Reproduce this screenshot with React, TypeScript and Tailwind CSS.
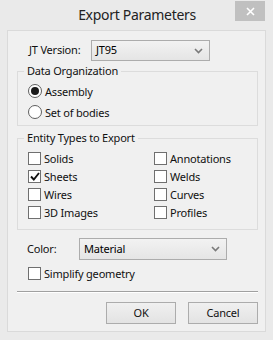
import React from "react";

const font = { fontFamily: "'Noto Sans', 'Open Sans', sans-serif" };

function Chevron() {
  return (
    <svg width="9" height="6" viewBox="0 0 9 6" className="shrink-0">
      <path d="M1 1 L4.5 4.5 L8 1" fill="none" stroke="#7a7a7a" strokeWidth="1.6" />
    </svg>
  );
}

function Select({ value, className }: { value: string; className: string }) {
  return (
    <div
      className={`flex items-center justify-between border border-[#acacac] bg-gradient-to-b from-[#f2f2f2] to-[#e5e5e5] pl-[4px] pr-[6px] text-[11px] tracking-[-0.2px] text-black ${className}`}
    >
      <span>{value}</span>
      <Chevron />
    </div>
  );
}

function CheckBox({ label, checked = false }: { label: string; checked?: boolean }) {
  return (
    <div className="flex h-[18px] items-center gap-[3px]">
      <span className="flex h-[13px] w-[13px] items-center justify-center border border-[#6f6f6f] bg-white">
        {checked && (
          <svg width="10" height="9" viewBox="0 0 10 9">
            <path d="M1 4.5 L3.8 7.5 L9 1" fill="none" stroke="#111" strokeWidth="1.9" />
          </svg>
        )}
      </span>
      <span className="text-[11px] leading-none tracking-[-0.2px] text-[#111]">{label}</span>
    </div>
  );
}

function Radio({ label, checked = false }: { label: string; checked?: boolean }) {
  return (
    <div className="flex h-[16px] items-center gap-[3px]">
      <span className="flex h-[14px] w-[14px] items-center justify-center rounded-full border border-[#5f5f5f] bg-white">
        {checked && <span className="h-[8px] w-[8px] rounded-full bg-[#1b1b1b]" />}
      </span>
      <span className="text-[11px] leading-none tracking-[-0.2px] text-[#111]">{label}</span>
    </div>
  );
}

export default function App() {
  return (
    <div className="flex h-[340px] w-[273px] flex-col bg-[#eaeaea]" style={font}>
      {/* Title bar */}
      <div className="relative h-[30px] shrink-0">
        <div className="pl-[1px] pt-[4px] text-center text-[14px] leading-[22px] tracking-[-0.3px] text-[#222]">Export Parameters</div>
        <div className="absolute right-[8px] top-[1px] flex h-[20px] w-[30px] items-center justify-center bg-[#c0c0c0]">
          <svg width="9" height="9" viewBox="0 0 9 9">
            <path d="M1 1 L8 8 M8 1 L1 8" stroke="#fff" strokeWidth="1.6" />
          </svg>
        </div>
      </div>

      {/* Client area */}
      <div className="mx-[7px] mb-[8px] flex flex-1 flex-col border border-[#dadada] bg-[#f0f0f0] pl-[9px] pr-[7px]">
        <div className="mt-[9px] flex items-center">
          <span className="w-[74px] pl-[12px] text-[11px] tracking-[-0.2px] text-[#111]">JT Version:</span>
          <Select value="JT95" className="h-[21px] w-[119px]" />
        </div>

        <fieldset className="mt-[2px] border border-[#dcdcdc] pb-[5px]">
          <legend className="ml-[6px] px-[3px] text-[11px] leading-[16px] tracking-[-0.2px] text-[#111]">Data Organization</legend>
          <div className="mt-[4px] flex flex-col gap-[5px] pl-[10px]">
            <Radio label="Assembly" checked />
            <Radio label="Set of bodies" />
          </div>
        </fieldset>

        <fieldset className="mt-[4px] border border-[#dcdcdc] pb-[8px]">
          <legend className="ml-[6px] px-[3px] text-[11px] leading-[16px] tracking-[-0.2px] text-[#111]">Entity Types to Export</legend>
          <div className="mt-[3px] grid grid-cols-[126px_1fr] pl-[10px]">
            <CheckBox label="Solids" />
            <CheckBox label="Annotations" />
            <CheckBox label="Sheets" checked />
            <CheckBox label="Welds" />
            <CheckBox label="Wires" />
            <CheckBox label="Curves" />
            <CheckBox label="3D Images" />
            <CheckBox label="Profiles" />
          </div>
        </fieldset>

        <div className="mt-[8px] flex items-center">
          <span className="w-[62px] pl-[10px] text-[11px] tracking-[-0.2px] text-[#111]">Color:</span>
          <Select value="Material" className="h-[22px] w-[148px]" />
        </div>

        <div className="mt-[4px] pl-[11px]">
          <CheckBox label="Simplify geometry" />
        </div>

        <div className="mt-[9px] h-[2px] border-t border-[#a0a0a0] bg-white" />

        <div className="mt-[9px] flex justify-end gap-[12px]">
          <button className="h-[22px] w-[70px] border border-[#acacac] bg-gradient-to-b from-[#f0f0f0] to-[#e3e3e3] text-[11px] tracking-[-0.2px] text-[#111]">
            OK
          </button>
          <button className="h-[22px] w-[70px] border border-[#acacac] bg-gradient-to-b from-[#f0f0f0] to-[#e3e3e3] text-[11px] tracking-[-0.2px] text-[#111]">
            Cancel
          </button>
        </div>
      </div>
    </div>
  );
}
